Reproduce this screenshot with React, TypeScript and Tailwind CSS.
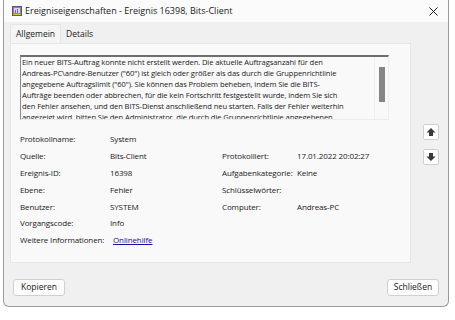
import React from 'react';

const lines = [
  'Ein neuer BITS-Auftrag konnte nicht erstellt werden. Die aktuelle Auftragsanzahl für den',
  'Andreas-PC\\andre-Benutzer ("60") ist gleich oder größer als das durch die Gruppenrichtlinie',
  'angegebene Auftragslimit ("60"). Sie können das Problem beheben, indem Sie die BITS-',
  'Aufträge beenden oder abbrechen, für die kein Fortschritt festgestellt wurde, indem Sie sich',
  'den Fehler ansehen, und den BITS-Dienst anschließend neu starten. Falls der Fehler weiterhin',
  'angezeigt wird, bitten Sie den Administrator, die durch die Gruppenrichtlinie angegebenen',
];

const rows: [string, string, string, string][] = [
  ['Protokollname:', 'System', '', ''],
  ['Quelle:', 'Bits-Client', 'Protokolliert:', '17.01.2022 20:02:27'],
  ['Ereignis-ID:', '16398', 'Aufgabenkategorie:', 'Keine'],
  ['Ebene:', 'Fehler', 'Schlüsselwörter:', ''],
  ['Benutzer:', 'SYSTEM', 'Computer:', 'Andreas-PC'],
  ['Vorgangscode:', 'Info', '', ''],
];

function EventIcon() {
  return (
    <svg width="10" height="10" viewBox="0 0 10 10">
      <rect x="0.5" y="0.5" width="9" height="9" fill="#8a7fb5" stroke="#5b5488" />
      <rect x="2" y="2" width="6" height="5" fill="#d9d4ee" />
      <rect x="3" y="4" width="1" height="3" fill="#c0504d" />
      <rect x="5" y="3" width="1" height="4" fill="#4f81bd" />
      <rect x="1.5" y="8" width="7" height="1" fill="#f0c040" />
    </svg>
  );
}

function ArrowButton({ down }: { down?: boolean }) {
  return (
    <div className="w-[16px] h-[16px] bg-white border border-[#d0d0d0] rounded-[2px] flex items-center justify-center">
      <svg width="10" height="10" viewBox="0 0 10 10" className={down ? 'rotate-180' : ''}>
        <path d="M5 1 L9.5 5.5 L7 5.5 L7 9 L3 9 L3 5.5 L0.5 5.5 Z" fill="#3a3a3a" />
      </svg>
    </div>
  );
}

export default function App() {
  return (
    <div className="w-[455px] h-[320px] bg-white text-[#1a1a1a] text-[8px] tracking-[-0.12px]" style={{ fontFamily: '"Open Sans", "Noto Sans", sans-serif' }}>
      <div className="ml-[3px] w-[446px] h-[307px] border border-t-0 border-[#9a9a9a] rounded-b-[6px] bg-[#f0f0f0] flex flex-col overflow-hidden">
        {/* title bar */}
        <div className="h-[22px] bg-[#fbfbfb] flex items-center pl-[8px] pr-[8px] tracking-normal">
          <EventIcon />
          <span className="ml-[3px] text-[9px]">Ereigniseigenschaften - Ereignis 16398, Bits-Client</span>
          <svg className="ml-auto mr-[2px]" width="9" height="9" viewBox="0 0 9 9">
            <path d="M0.5 0.5 L8.5 8.5 M8.5 0.5 L0.5 8.5" stroke="#222" strokeWidth="1" />
          </svg>
        </div>

        {/* tabs */}
        <div className="h-[21px] flex items-end pl-[6px] text-[8.5px] tracking-normal">
          <div className="h-[19px] px-[5px] flex items-center bg-[#f5f5f5] border border-b-0 border-[#e4e4e4] rounded-t-[2px]">Allgemein</div>
          <div className="h-[17px] px-[5px] flex items-center">Details</div>
        </div>

        <div className="flex pl-[6px]">
          {/* tab page */}
          <div className="w-[401px] h-[220px] bg-[#f9f9f9] border border-[#e6e6e6] pt-[11px] pl-[9px]">
            <div className="w-[369px] h-[65px] flex border-t-2 border-l border-t-[#6e6e6e] border-l-[#8a8a8a] border-r border-b border-r-[#ececec] border-b-[#ececec] bg-[#f9f9f9]">
              <div className="flex-1 pl-[1px] leading-[10.9px] overflow-hidden text-[7.6px] tracking-[-0.1px]">
                {lines.map((l) => (
                  <div key={l} className="whitespace-nowrap">{l}</div>
                ))}
              </div>
              <div className="w-[14px] border-l border-[#eeeeee] flex justify-center pt-[10px]">
                <div className="w-[6px] h-[35px] bg-[#858585]" />
              </div>
            </div>

            <div className="mt-[11px] flex flex-col">
              {rows.map(([l1, v1, l2, v2]) => (
                <div key={l1} className="h-[16.8px] flex items-center">
                  <div className="w-[90px]">{l1}</div>
                  <div className="w-[112px]">{v1}</div>
                  <div className="w-[75px]">{l2}</div>
                  <div>{v2}</div>
                </div>
              ))}
              <div className="h-[16.8px] flex items-center">
                <div className="w-[93px]">Weitere Informationen:</div>
                <span className="text-[#1a0dab] underline">Onlinehilfe</span>
              </div>
            </div>
          </div>

          {/* navigation arrows */}
          <div className="flex flex-col ml-[12px] pt-[81px] gap-[9px]">
            <ArrowButton />
            <ArrowButton down />
          </div>
        </div>

        {/* bottom buttons */}
        <div className="flex justify-between px-[9px] mt-[16px]">
          <button className="w-[52px] h-[17px] bg-[#fdfdfd] border border-[#d0d0d0] rounded-[3px] text-[8.5px] tracking-normal">Kopieren</button>
          <button className="w-[52px] h-[17px] bg-[#fdfdfd] border border-[#d0d0d0] rounded-[3px] text-[8.5px] tracking-normal">Schließen</button>
        </div>
      </div>
    </div>
  );
}
